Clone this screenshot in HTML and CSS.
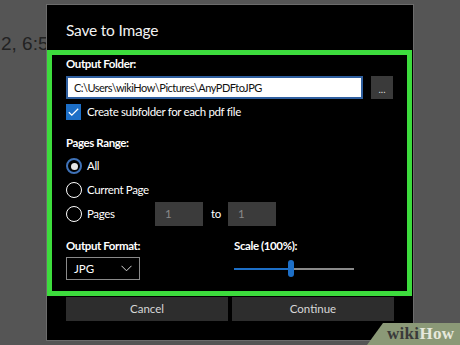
FILE: index.html
```html
<!DOCTYPE html>
<html>
<head>
<meta charset="utf-8">
<link rel="stylesheet" href="styles.css">
</head>
<body>
<div class="backdrop">
  <div class="bg-text">2, 6:5</div>
</div>
<div class="dialog">
  <div class="title">Save to Image</div>
  <div class="panel">
    <div class="label">Output Folder:</div>
    <div class="folder-row">
      <div class="path-input">C:\Users\wikiHow\Pictures\AnyPDFtoJPG</div>
      <div class="browse">...</div>
    </div>
    <div class="check-row">
      <span class="checkbox"><svg width="16" height="16" viewBox="0 0 16 16"><path d="M3 8.2 L6.2 11.4 L13 4.6" fill="none" stroke="#fff" stroke-width="1.4"/></svg></span>
      <span class="opt">Create subfolder for each pdf file</span>
    </div>
    <div class="label section">Pages Range:</div>
    <div class="radio-row first">
      <span class="radio selected"></span><span class="opt">All</span>
    </div>
    <div class="radio-row">
      <span class="radio"></span><span class="opt">Current Page</span>
    </div>
    <div class="radio-row">
      <span class="radio"></span><span class="opt pages-label">Pages</span>
      <span class="num-box">1</span>
      <span class="opt to">to</span>
      <span class="num-box">1</span>
    </div>
    <div class="bottom-grid">
      <div class="col">
        <div class="label">Output Format:</div>
        <div class="select"><span>JPG</span><svg width="11" height="7" viewBox="0 0 11 7"><polyline points="0.5,0.8 5.5,5.8 10.5,0.8" fill="none" stroke="#d8d8d8" stroke-width="1"/></svg></div>
      </div>
      <div class="col">
        <div class="label">Scale (100%):</div>
        <div class="slider">
          <div class="track-fill"></div>
          <div class="track-rest"></div>
          <div class="thumb"></div>
        </div>
      </div>
    </div>
  </div>
  <div class="buttons">
    <div class="btn">Cancel</div>
    <div class="btn">Continue</div>
  </div>
</div>
<div class="watermark"><span class="wiki">wiki</span><span class="how">How</span></div>
</body>
</html>
```
FILE: styles.css
```css
html, body {
  margin: 0;
  padding: 0;
  width: 460px;
  height: 345px;
  overflow: hidden;
  background: #555555;
  font-family: "Lato", "Noto Sans", sans-serif;
}
.backdrop {
  padding: 33px 0 0 1px;
}
.bg-text {
  font-family: "Liberation Sans", Arial, sans-serif;
  font-size: 19px;
  color: #222;
}
.dialog {
  position: absolute;
  left: 46px;
  top: 4px;
  width: 366px;
  height: 335px;
  background: #000;
  border: 1px solid #6c6c6c;
}
.title {
  height: 45px;
  box-sizing: border-box;
  padding: 15px 0 0 19px;
  color: #f2f2f2;
  font-size: 15.5px;
  line-height: 20px;
  letter-spacing: -0.2px;
}
.panel {
  border: 5px solid #3ddc3d;
  padding: 0 14px 11px 14px;
  margin-right: 1px;
}
.label {
  color: #fff;
  font-size: 11.5px;
  font-weight: 700;
  line-height: 18px;
  letter-spacing: -0.4px;
}
.label.section {
  margin-top: 14px;
}
.folder-row {
  margin-top: 3px;
  display: flex;
  gap: 8px;
  height: 23px;
}
.path-input {
  width: 298px;
  box-sizing: border-box;
  background: #fff;
  border: 2px solid #2f5f9f;
  color: #111;
  font-size: 11px;
  line-height: 19px;
  letter-spacing: -0.5px;
  padding-left: 6px;
  white-space: nowrap;
  overflow: hidden;
}
.browse {
  width: 22px;
  background: #3a3a3a;
  color: #ddd;
  font-size: 10px;
  line-height: 26px;
  text-align: center;
}
.check-row {
  margin-top: 5px;
  height: 16px;
  display: flex;
  align-items: center;
}
.checkbox {
  width: 15px;
  height: 16px;
  background: #1d6fc7;
  display: flex;
}
.opt {
  color: #fff;
  font-size: 11.5px;
  line-height: 16px;
  letter-spacing: -0.35px;
  margin-left: 6px;
}
.radio-row {
  height: 24px;
  display: flex;
  align-items: center;
}
.radio-row.first {
  margin-top: 2px;
}
.radio {
  width: 16px;
  height: 16px;
  box-sizing: border-box;
  border: 1.5px solid #fff;
  border-radius: 50%;
  flex: none;
}
.radio.selected {
  border: 2px solid #3f72b8;
  display: flex;
  align-items: center;
  justify-content: center;
}
.radio.selected::after {
  content: "";
  width: 7px;
  height: 7px;
  border-radius: 50%;
  background: #e6e6e6;
}
.radio-row .opt {
  margin-left: 5px;
}
.pages-label {
  width: 68px;
}
.num-box {
  width: 48px;
  height: 24px;
  box-sizing: border-box;
  background: #3b3b3b;
  color: #8a8a8a;
  font-size: 11.5px;
  line-height: 24px;
  padding-left: 10px;
}
.radio-row .opt.to {
  margin-left: 8px;
  width: 17px;
}
.bottom-grid {
  margin-top: 11px;
  display: grid;
  grid-template-columns: 168px 1fr;
}
.select {
  margin-top: 2px;
  width: 74px;
  height: 23px;
  box-sizing: border-box;
  border: 1px solid #8a8a8a;
  display: flex;
  align-items: center;
  justify-content: space-between;
  padding: 0 7px 0 7px;
  color: #fff;
  font-size: 11.5px;
}
.slider {
  position: relative;
  margin-top: 5px;
  width: 120px;
  height: 17px;
  display: flex;
  align-items: center;
}
.track-fill {
  width: 57px;
  height: 2px;
  background: #1d6fc7;
}
.track-rest {
  flex: 1;
  height: 2px;
  background: #8a8a8a;
}
.thumb {
  position: absolute;
  left: 54px;
  top: 0;
  width: 6px;
  height: 17px;
  border-radius: 3px;
  background: #1d6fc7;
}
.buttons {
  margin-top: 1px;
  padding-left: 19px;
  display: flex;
  gap: 4px;
}
.btn {
  width: 162px;
  height: 24px;
  background: #2d2d2d;
  color: #d8d8d8;
  font-size: 11.5px;
  line-height: 24px;
  text-align: center;
}
.watermark {
  position: absolute;
  right: 0;
  bottom: 0;
  width: 93px;
  height: 22px;
  background: #8b9977;
  clip-path: polygon(16px 0, 100% 0, 100% 100%, 0 100%);
  font-family: "Liberation Serif", "DejaVu Serif", serif;
  font-weight: bold;
  font-size: 17px;
  line-height: 22px;
  letter-spacing: 0.3px;
  padding-left: 20px;
  box-sizing: border-box;
}
.wiki { color: #3a3a3a; }
.how { color: #e6e8dc; }
```
